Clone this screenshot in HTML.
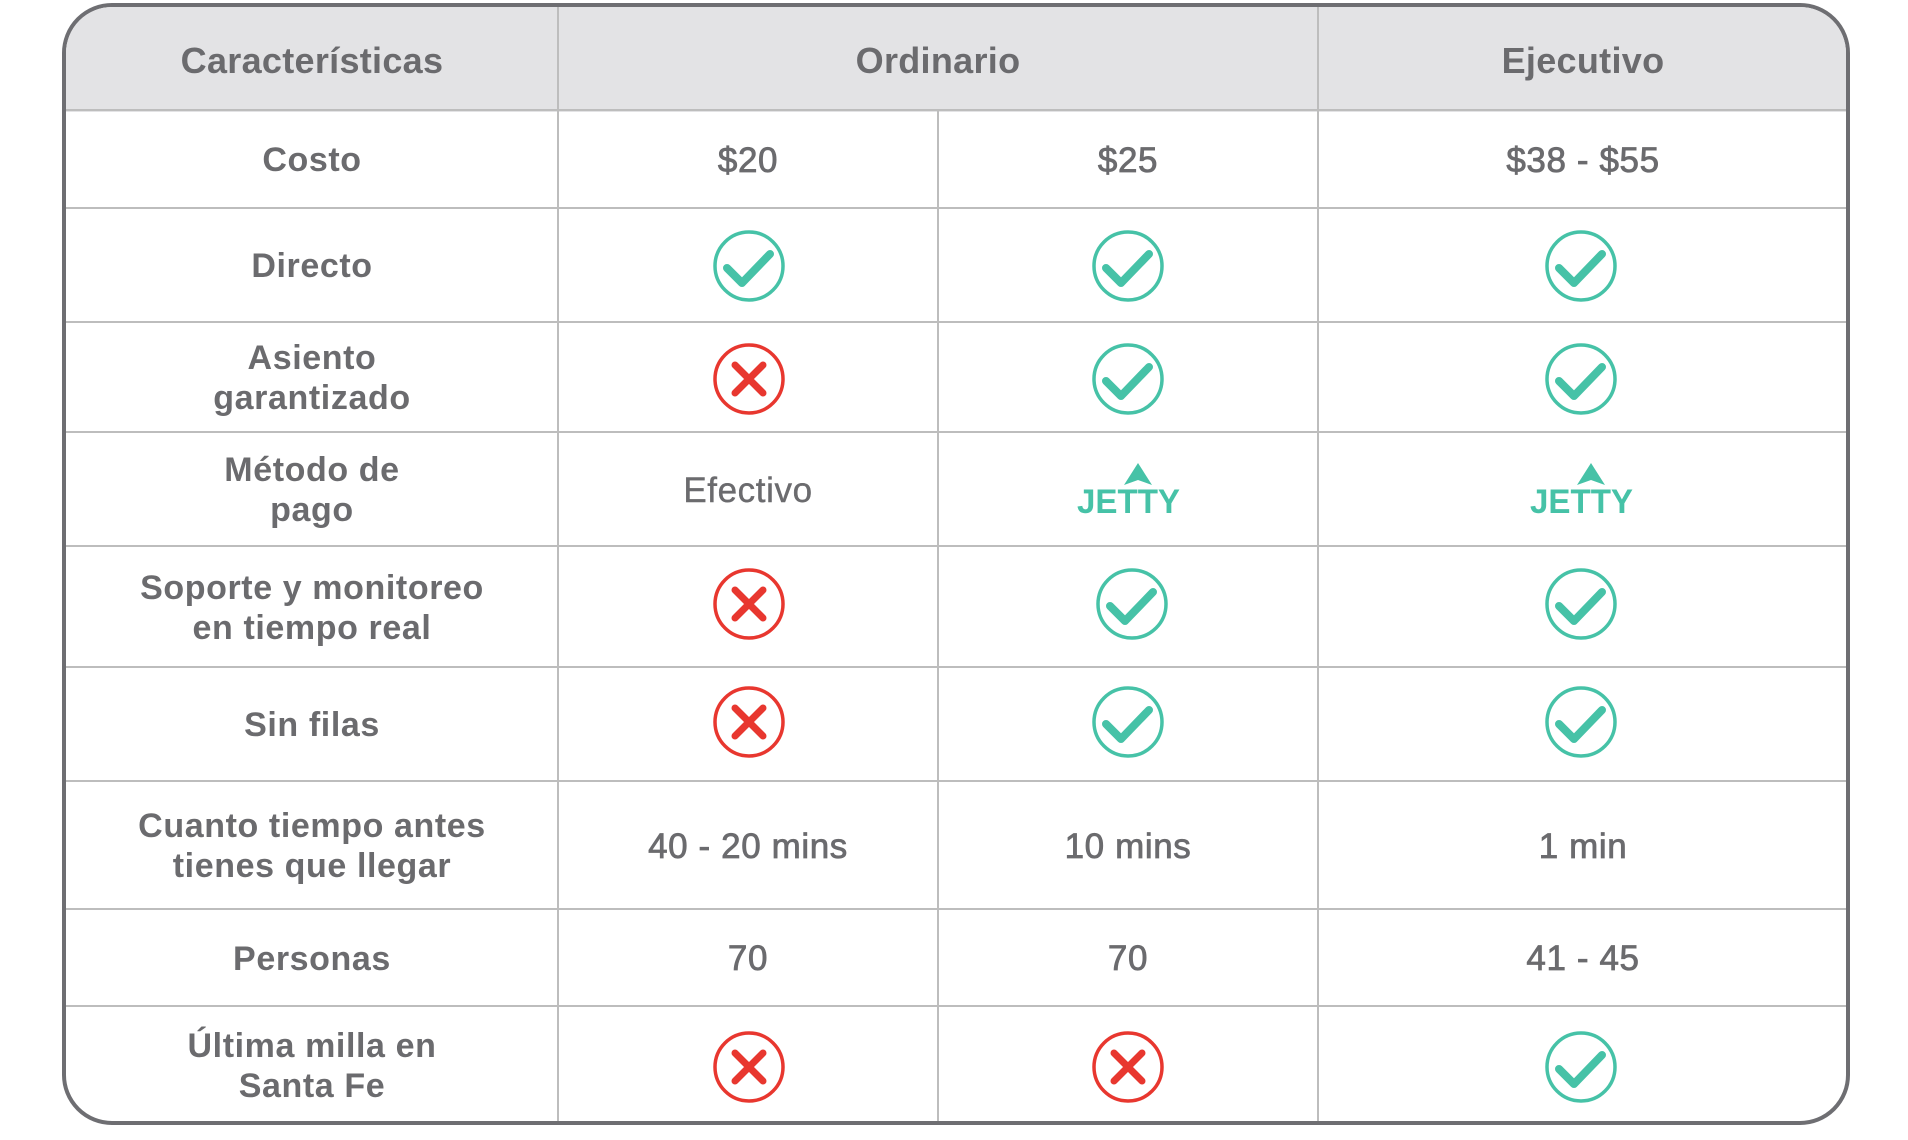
<!DOCTYPE html>
<html><head><meta charset="utf-8">
<style>
html,body{margin:0;padding:0;background:#fff;}
body{width:1908px;height:1140px;position:relative;overflow:hidden;font-family:"Liberation Sans",sans-serif;color:#6b6b6e;}
#box{position:absolute;left:62px;top:3px;width:1780px;height:1114px;border:4px solid #6e6e72;border-radius:50px;overflow:hidden;background:#fff;}
#hdr{position:absolute;left:0;top:0;width:100%;height:105px;background:#e3e3e5;}
.h{position:absolute;height:2px;background:#bdbdbd;left:0;width:100%;}
.v{position:absolute;width:2px;background:#bdbdbd;}
.c{position:absolute;display:flex;align-items:center;justify-content:center;text-align:center;}
.lab{font-weight:700;font-size:34px;letter-spacing:0.6px;line-height:40px;padding-top:2px;box-sizing:border-box;}
.hd{font-weight:700;font-size:36px;letter-spacing:0.3px;padding-top:4px;box-sizing:border-box;}
.val{font-size:35px;letter-spacing:0.6px;-webkit-text-stroke:0.8px #6b6b6e;padding-top:3px;box-sizing:border-box;}
svg{display:block;}
</style></head><body>
<div id="box">
<div id="hdr"></div>
<div class="h" style="top:102px"></div>
<div class="h" style="top:200px"></div>
<div class="h" style="top:314px"></div>
<div class="h" style="top:424px"></div>
<div class="h" style="top:538px"></div>
<div class="h" style="top:659px"></div>
<div class="h" style="top:773px"></div>
<div class="h" style="top:901px"></div>
<div class="h" style="top:998px"></div>
<div class="v" style="left:491px;top:0;height:1114px"></div>
<div class="v" style="left:871px;top:103px;height:1011px"></div>
<div class="v" style="left:1251px;top:0;height:1114px"></div>
</div>

<div class="c hd" style="left:66px;top:7px;width:492px;height:103px">Características</div>
<div class="c hd" style="left:558px;top:7px;width:760px;height:103px">Ordinario</div>
<div class="c hd" style="left:1318px;top:7px;width:530px;height:103px">Ejecutivo</div>

<div class="c lab" style="left:66px;top:110px;width:492px;height:98px">Costo</div>
<div class="c lab" style="left:66px;top:208px;width:492px;height:114px">Directo</div>
<div class="c lab" style="left:66px;top:322px;width:492px;height:110px">Asiento<br>garantizado</div>
<div class="c lab" style="left:66px;top:432px;width:492px;height:114px">Método de<br>pago</div>
<div class="c lab" style="left:66px;top:546px;width:492px;height:121px">Soporte y monitoreo<br>en tiempo real</div>
<div class="c lab" style="left:66px;top:667px;width:492px;height:114px">Sin filas</div>
<div class="c lab" style="left:66px;top:781px;width:492px;height:128px">Cuanto tiempo antes<br>tienes que llegar</div>
<div class="c lab" style="left:66px;top:909px;width:492px;height:97px">Personas</div>
<div class="c lab" style="left:66px;top:1006px;width:492px;height:117px">Última milla en<br>Santa Fe</div>

<div class="c val" style="left:558px;top:110px;width:380px;height:98px">$20</div>
<div class="c val" style="left:938px;top:110px;width:380px;height:98px">$25</div>
<div class="c val" style="left:1318px;top:110px;width:530px;height:98px">$38 - $55</div>
<div class="c val" style="left:558px;top:432px;width:380px;height:114px;-webkit-text-stroke:0.4px #6b6b6e">Efectivo</div>
<div class="c val" style="left:558px;top:781px;width:380px;height:128px">40 - 20 mins</div>
<div class="c val" style="left:938px;top:781px;width:380px;height:128px">10 mins</div>
<div class="c val" style="left:1318px;top:781px;width:530px;height:128px">1 min</div>
<div class="c val" style="left:558px;top:909px;width:380px;height:97px">70</div>
<div class="c val" style="left:938px;top:909px;width:380px;height:97px">70</div>
<div class="c val" style="left:1318px;top:909px;width:530px;height:97px">41 - 45</div>

<svg width="1908" height="1140" style="position:absolute;left:0;top:0">
<defs>
<g id="ok"><circle cx="0" cy="0" r="34" fill="none" stroke="#46c2a7" stroke-width="3.5"/><path d="M-22,2 L-7,17 L21,-12" fill="none" stroke="#46c2a7" stroke-width="8" stroke-linecap="round" stroke-linejoin="round"/></g>
<g id="no"><circle cx="0" cy="0" r="34" fill="none" stroke="#e8372f" stroke-width="3.5"/><path d="M-14,-14 L14,14 M14,-14 L-14,14" fill="none" stroke="#e8372f" stroke-width="7" stroke-linecap="round"/></g>
<g id="jetty">
<text x="0" y="0" font-family="Liberation Sans,sans-serif" font-weight="700" font-size="34" fill="#46c2a7" textLength="103" lengthAdjust="spacingAndGlyphs">JETTY</text>
<path d="M61,-50 L47,-28 L61,-33 L75,-28 Z" fill="#46c2a7"/>
</g>
</defs>
<use href="#ok" x="749" y="266"/><use href="#ok" x="1128" y="266"/><use href="#ok" x="1581" y="266"/>
<use href="#no" x="749" y="379"/><use href="#ok" x="1128" y="379"/><use href="#ok" x="1581" y="379"/>
<use href="#jetty" x="1077" y="513"/><use href="#jetty" x="1530" y="513"/>
<use href="#no" x="749" y="604"/><use href="#ok" x="1132" y="604"/><use href="#ok" x="1581" y="604"/>
<use href="#no" x="749" y="722"/><use href="#ok" x="1128" y="722"/><use href="#ok" x="1581" y="722"/>
<use href="#no" x="749" y="1067"/><use href="#no" x="1128" y="1067"/><use href="#ok" x="1581" y="1067"/>
</svg>
</body></html>
